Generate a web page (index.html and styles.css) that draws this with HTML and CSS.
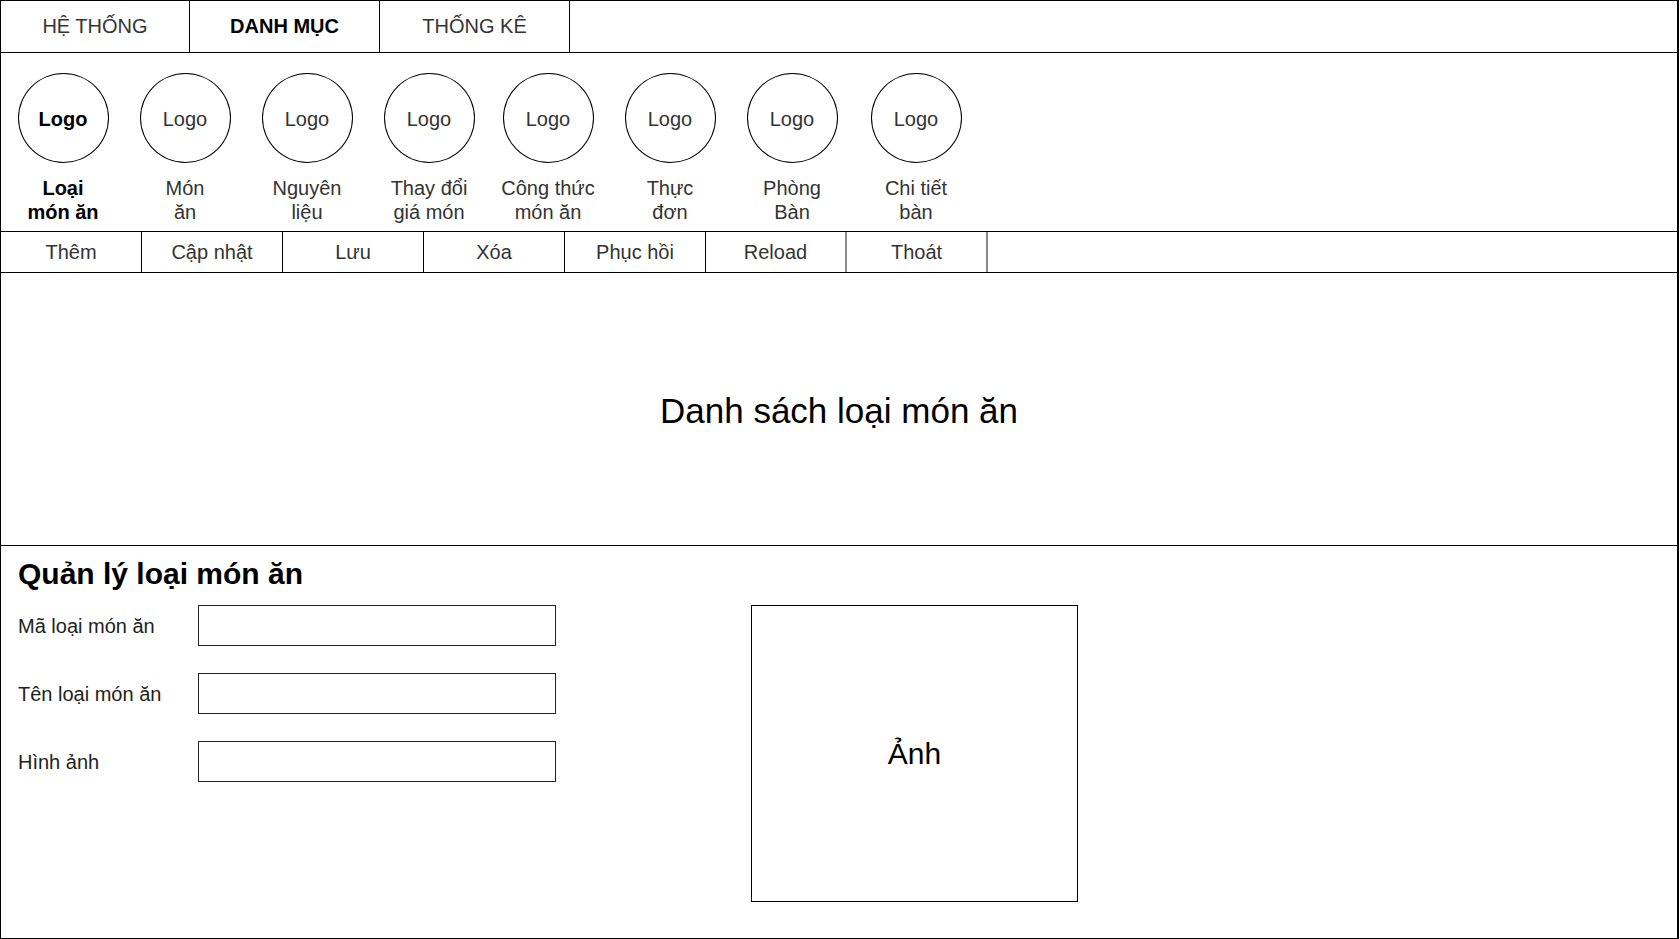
FILE: index.html
```html
<!DOCTYPE html>
<html lang="vi">
<head>
<meta charset="utf-8">
<title>Quản lý loại món ăn</title>
<link rel="stylesheet" href="styles.css">
</head>
<body>
<div class="frame">
  <nav class="tabs">
    <div class="tab">HỆ THỐNG</div>
    <div class="tab tab-active">DANH MỤC</div>
    <div class="tab">THỐNG KÊ</div>
  </nav>

  <div class="modules">
    <div class="module module-active">
      <div class="logo">Logo</div>
      <div class="module-label">Loại<br>món ăn</div>
    </div>
    <div class="module">
      <div class="logo">Logo</div>
      <div class="module-label">Món<br>ăn</div>
    </div>
    <div class="module">
      <div class="logo">Logo</div>
      <div class="module-label">Nguyên<br>liệu</div>
    </div>
    <div class="module">
      <div class="logo">Logo</div>
      <div class="module-label">Thay đổi<br>giá món</div>
    </div>
    <div class="module module-tight">
      <div class="logo">Logo</div>
      <div class="module-label">Công thức<br>món ăn</div>
    </div>
    <div class="module">
      <div class="logo">Logo</div>
      <div class="module-label">Thực<br>đơn</div>
    </div>
    <div class="module">
      <div class="logo">Logo</div>
      <div class="module-label">Phòng<br>Bàn</div>
    </div>
    <div class="module module-wide">
      <div class="logo">Logo</div>
      <div class="module-label">Chi tiết<br>bàn</div>
    </div>
  </div>

  <div class="toolbar">
    <div class="tool">Thêm</div>
    <div class="tool">Cập nhật</div>
    <div class="tool">Lưu</div>
    <div class="tool">Xóa</div>
    <div class="tool">Phục hồi</div>
    <div class="tool tool-grey">Reload</div>
    <div class="tool tool-grey">Thoát</div>
  </div>

  <div class="list">Danh sách loại món ăn</div>

  <section class="form">
    <h2 class="form-title">Quản lý loại món ăn</h2>
    <div class="form-body">
      <div class="fields">
        <div class="field">
          <label class="field-label">Mã loại món ăn</label>
          <div class="field-input"></div>
        </div>
        <div class="field">
          <label class="field-label">Tên loại món ăn</label>
          <div class="field-input"></div>
        </div>
        <div class="field">
          <label class="field-label">Hình ảnh</label>
          <div class="field-input"></div>
        </div>
      </div>
      <div class="photo">Ảnh</div>
    </div>
  </section>
</div>
</body>
</html>
```

FILE: styles.css
```css
* {
  box-sizing: border-box;
}

html, body {
  margin: 0;
  padding: 0;
  background: #fff;
}

body {
  font-family: "Liberation Sans", Arial, sans-serif;
  color: #1e1e1e;
}

.frame {
  width: 1679px;
  height: 939px;
  border: 1px solid #000;
  border-right-width: 2px;
  display: flex;
  flex-direction: column;
  overflow: hidden;
}

/* top tabs */
.tabs {
  display: flex;
  height: 52px;
  border-bottom: 1px solid #000;
  flex: none;
}

.tab {
  width: 190px;
  border-right: 1px solid #000;
  display: flex;
  align-items: center;
  justify-content: center;
  font-size: 20px;
  color: #333;
}

.tab:first-child {
  width: 189px;
}

.tab-active {
  font-weight: bold;
  color: #000;
}

/* modules with logos */
.modules {
  display: flex;
  height: 179px;
  padding: 20px 0 0 1px;
  border-bottom: 1px solid #000;
  flex: none;
}

.module {
  width: 122px;
  display: flex;
  flex-direction: column;
  align-items: center;
}

.module-tight {
  margin-left: -3px;
}

.module-wide {
  margin-left: 2px;
}

.logo {
  width: 91px;
  height: 90px;
  border: 1px solid #000;
  border-radius: 50%;
  display: flex;
  align-items: center;
  justify-content: center;
  padding-top: 2px;
  font-size: 20px;
  color: #333;
}

.module-label {
  margin-top: 14px;
  font-size: 20px;
  line-height: 23.5px;
  text-align: center;
  color: #333;
  white-space: nowrap;
}

.module-active .logo,
.module-active .module-label {
  font-weight: bold;
  color: #000;
}

/* toolbar */
.toolbar {
  display: flex;
  height: 41px;
  border-bottom: 1px solid #000;
  flex: none;
}

.tool {
  width: 141px;
  border-right: 1px solid #000;
  display: flex;
  align-items: center;
  justify-content: center;
  font-size: 20px;
  color: #333;
}

.tool-grey {
  border-right: 2px solid #8a8a8a;
}

/* list area */
.list {
  height: 273px;
  padding-top: 4px;
  border-bottom: 1px solid #000;
  display: flex;
  align-items: center;
  justify-content: center;
  font-size: 35px;
  color: #000;
  flex: none;
}

/* form */
.form {
  flex: 1;
  padding: 11px 0 0 17px;
}

.form-title {
  margin: 0;
  font-size: 30px;
  line-height: 34px;
  font-weight: bold;
  color: #000;
}

.form-body {
  display: flex;
  align-items: flex-start;
  margin-top: 14px;
}

.fields {
  display: flex;
  flex-direction: column;
  gap: 27px;
}

.field {
  display: flex;
  align-items: center;
}

.field-label {
  width: 180px;
  padding-top: 1px;
  font-size: 20px;
  color: #1e1e1e;
}

.field-input {
  width: 358px;
  height: 41px;
  border: 1px solid #222;
}

.photo {
  margin-left: 195px;
  width: 327px;
  height: 297px;
  border: 1px solid #000;
  display: flex;
  align-items: center;
  justify-content: center;
  font-size: 30px;
  color: #000;
}
```
